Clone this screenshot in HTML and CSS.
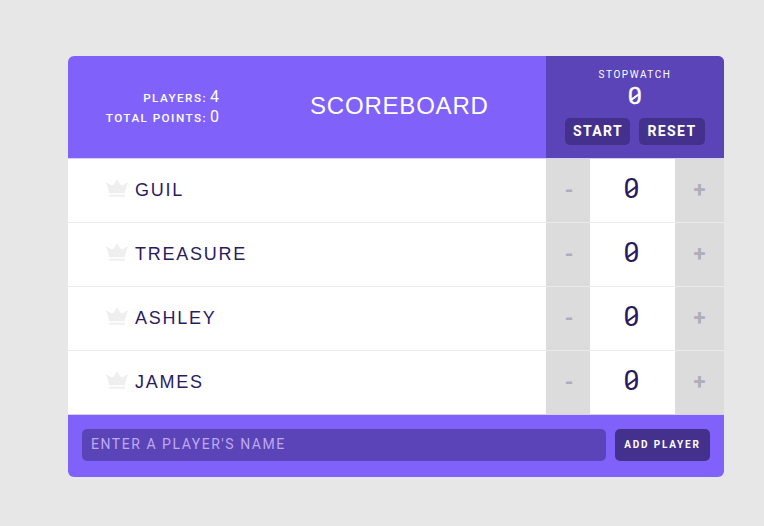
FILE: index.html
```html
<!DOCTYPE html>
<html lang="en">
<head>
<meta charset="utf-8">
<title>Scoreboard</title>
<link rel="stylesheet" href="styles.css">
</head>
<body>
<svg class="defs" aria-hidden="true"><symbol id="crown" viewBox="0 0 44 35"><path d="M0 6 9 11C13 13 15 12 17 8L22 0l5 8c2 4 4 5 8 3l9-5-7 22H7z"/><path d="M6 31h32v4H6z"/></symbol></svg>
<main class="scoreboard">
<header class="header">
<div class="stats">
<div><span class="label">Players:</span><span class="value">4</span></div>
<div><span class="label">Total Points:</span><span class="value">0</span></div>
</div>
<h1>Scoreboard</h1>
<section class="stopwatch">
<h2>Stopwatch</h2>
<div class="time"><span class="zero">0</span></div>
<div class="controls"><button class="start">Start</button><button class="reset">Reset</button></div>
</section>
</header>
<div class="player"><span class="name"><svg class="crown"><use href="#crown"/></svg>Guil</span><button class="minus">-</button><span class="score"><span class="zero">0</span></span><button class="plus">+</button></div>
<div class="player"><span class="name"><svg class="crown"><use href="#crown"/></svg>Treasure</span><button class="minus">-</button><span class="score"><span class="zero">0</span></span><button class="plus">+</button></div>
<div class="player"><span class="name"><svg class="crown"><use href="#crown"/></svg>Ashley</span><button class="minus">-</button><span class="score"><span class="zero">0</span></span><button class="plus">+</button></div>
<div class="player"><span class="name"><svg class="crown"><use href="#crown"/></svg>James</span><button class="minus">-</button><span class="score"><span class="zero">0</span></span><button class="plus">+</button></div>
<form class="add">
<input type="text" placeholder="ENTER A PLAYER'S NAME">
<button type="button">Add Player</button>
</form>
</main>
</body>
</html>
```
FILE: styles.css
```css
* { box-sizing: border-box; }
body { margin: 0; padding: 56px 40px 49px 68px; background: #e7e7e7; font-family: "Liberation Sans", sans-serif; text-transform: uppercase; }
button, input { font: inherit; border: 0; margin: 0; padding: 0; text-transform: uppercase; }
.defs { display: none; }
.scoreboard { width: 656px; height: 421px; border-radius: 6px; overflow: hidden; background: #8062fb; color: #fff; }
.header { height: 102px; display: grid; grid-template-columns: 184px 294px 178px; }
.stats { padding: 31px 31px 0 0; white-space: nowrap; }
.stats div { display: flex; justify-content: flex-end; align-items: baseline; height: 20px; line-height: 20px; }
.label { font: 500 11.7px/20px Roboto, sans-serif; letter-spacing: 1.45px; }
.value { width: 11px; margin-left: 3px; font: 400 16px/20px Roboto, sans-serif; }
h1 { margin: 0; padding-left: 58px; font-size: 24px; line-height: 100px; font-weight: 400; letter-spacing: 0.8px; }
.stopwatch { background: #5b44b7; text-align: center; }
h2 { margin: 13px 0 0; font: 400 10px/12px Roboto, sans-serif; letter-spacing: 1.55px; }
.time { height: 30px; line-height: 30px; font-size: 24px; -webkit-text-stroke: 0.3px #fff; }
.zero { position: relative; display: inline-block; font-family: Roboto, sans-serif; transform: scaleX(1.05); }
.zero::after { content: ""; position: absolute; left: 12%; right: 12%; top: calc(50% - 0.5px); height: 2px; background: currentColor; transform: rotate(-37deg); }
.controls { display: flex; justify-content: center; gap: 9px; margin-top: 7px; }
.controls button { height: 27px; border-radius: 5px; background: #44318d; color: #fff; font: 700 14px/27px Roboto, sans-serif; letter-spacing: 1.4px; }
.controls .start { width: 65px; padding-left: 1px; }
.reset { width: 66px; }
.player { height: 64px; display: grid; grid-template-columns: 478px 44px 85px 49px; border-top: 1px solid #ebebeb; background: #fff; color: #2b1c62; }
.header + .player { border-top-color: #d8cffd; }
.name { display: flex; align-items: center; padding-left: 38px; font-size: 18px; letter-spacing: 1.75px; }
.crown { width: 22px; height: 18px; margin: -6px 7px 0 0; fill: #efefef; }
.player button { background: #dcdcdc; color: #b0adbb; font: 700 22px/60px Roboto, sans-serif; padding-bottom: 2px; }
.player .minus { padding: 1px 0 0 2px; }
.score { padding-right: 2px; text-align: center; font-size: 27px; line-height: 61px; }
.add { height: 63px; border-top: 1px solid #d8cffd; padding: 14px; display: flex; gap: 9px; }
.add input { width: 524px; height: 32px; padding: 0 9px 2px; border-radius: 5px; background: #5b44b7; color: #fff; font: 400 14px/30px Roboto, sans-serif; letter-spacing: 1.54px; }
.add input::placeholder { color: #bda9f4; opacity: 1; }
.add button { width: 95px; height: 32px; border-radius: 5px; background: #44318d; color: #fff; font: 700 10px/32px Roboto, sans-serif; letter-spacing: 1.8px; }
```
